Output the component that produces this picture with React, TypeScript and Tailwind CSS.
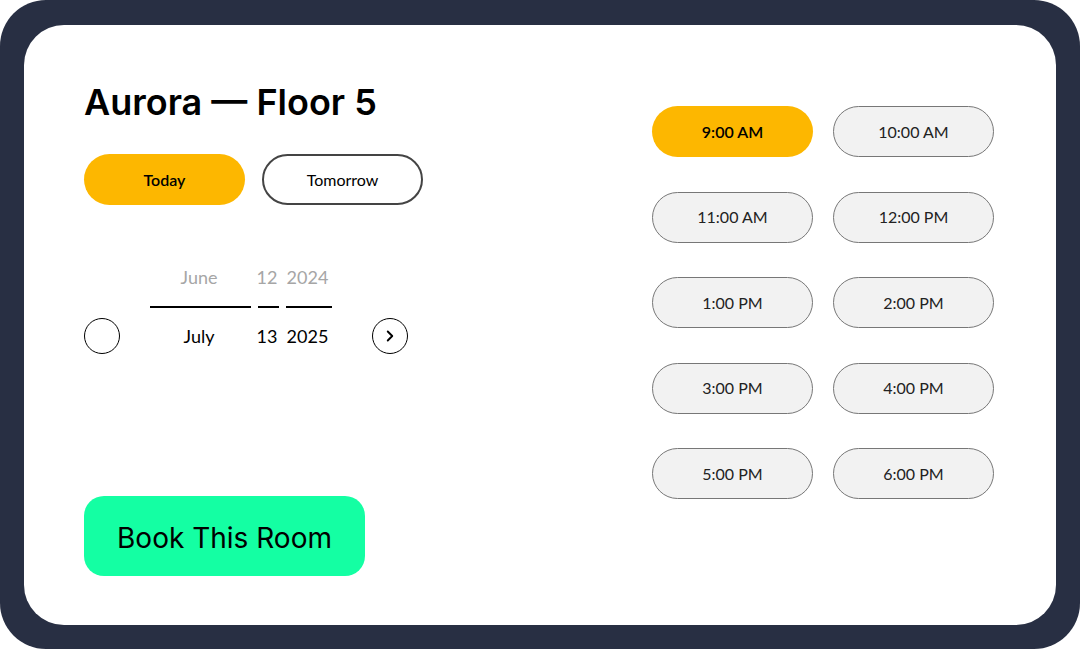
import { ChevronRight } from 'lucide-react';

const times = [
  '9:00 AM',
  '10:00 AM',
  '11:00 AM',
  '12:00 PM',
  '1:00 PM',
  '2:00 PM',
  '3:00 PM',
  '4:00 PM',
  '5:00 PM',
  '6:00 PM',
];

const dateColumns = [
  { prev: 'June', current: 'July', width: 'w-[101px]' },
  { prev: '12', current: '13', width: 'w-[21px]' },
  { prev: '2024', current: '2025', width: 'w-[46px]' },
];

export default function App() {
  return (
    <main className="w-[1080px] h-[649px] bg-white overflow-hidden">
      {/* Device frame */}
      <div className="w-full h-full bg-[#282f43] rounded-[46px] p-[24px] pt-[25px]">
        <div className="w-full h-full bg-white rounded-[40px] flex pl-[60px]">
          {/* Left: room + date */}
          <section className="w-[568px] flex flex-col pt-[55px] pb-[49px]">
            <h1 className="font-['Inter',sans-serif] text-[36px] leading-[44px] font-semibold text-black">
              Aurora — Floor 5
            </h1>

            <div className="flex gap-[17px] mt-[30px] font-['Lato',sans-serif] text-[16px]">
              <button className="w-[161px] h-[51px] rounded-full bg-[#fdb700] text-black font-semibold">
                Today
              </button>
              <button className="w-[161px] h-[51px] rounded-full border-2 border-[#444] text-black">
                Tomorrow
              </button>
            </div>

            {/* Date wheel */}
            <div className="flex items-end mt-[58px] font-['Lato',sans-serif] text-[18px]">
              <button className="w-9 h-9 rounded-full border border-black shrink-0" />
              <div className="flex gap-[7px] ml-[30px]">
                {dateColumns.map((c) => (
                  <div key={c.prev} className={`${c.width} flex flex-col items-center`}>
                    <span className="leading-[28px] text-[#a6a6a6] pr-[3px]">{c.prev}</span>
                    <div className="w-full h-[2px] bg-black mt-[15px]" />
                    <span className="h-9 mt-[10px] flex items-center text-black pr-[3px]">{c.current}</span>
                  </div>
                ))}
              </div>
              <button className="w-9 h-9 rounded-full border border-black shrink-0 ml-[40px] flex items-center justify-center">
                <ChevronRight size={18} strokeWidth={2.5} className="text-black" />
              </button>
            </div>

            <button className="mt-auto w-[281px] h-[80px] rounded-[20px] bg-[#14ffa3] font-['Inter',sans-serif] text-[28px] text-black pt-[3px]">
              Book This Room
            </button>
          </section>

          {/* Right: time slots */}
          <section className="pt-[81px]">
            <div className="grid grid-cols-[161px_161px] gap-x-[20px] gap-y-[34.5px] font-['Lato',sans-serif] text-[16px]">
              {times.map((t, i) =>
                i === 0 ? (
                  <button key={t} className="h-[51px] rounded-full bg-[#fdb700] text-black font-semibold">
                    {t}
                  </button>
                ) : (
                  <button key={t} className="h-[51px] rounded-full bg-[#f2f2f2] border border-[#777] text-[#222]">
                    {t}
                  </button>
                ),
              )}
            </div>
          </section>
        </div>
      </div>
    </main>
  );
}
